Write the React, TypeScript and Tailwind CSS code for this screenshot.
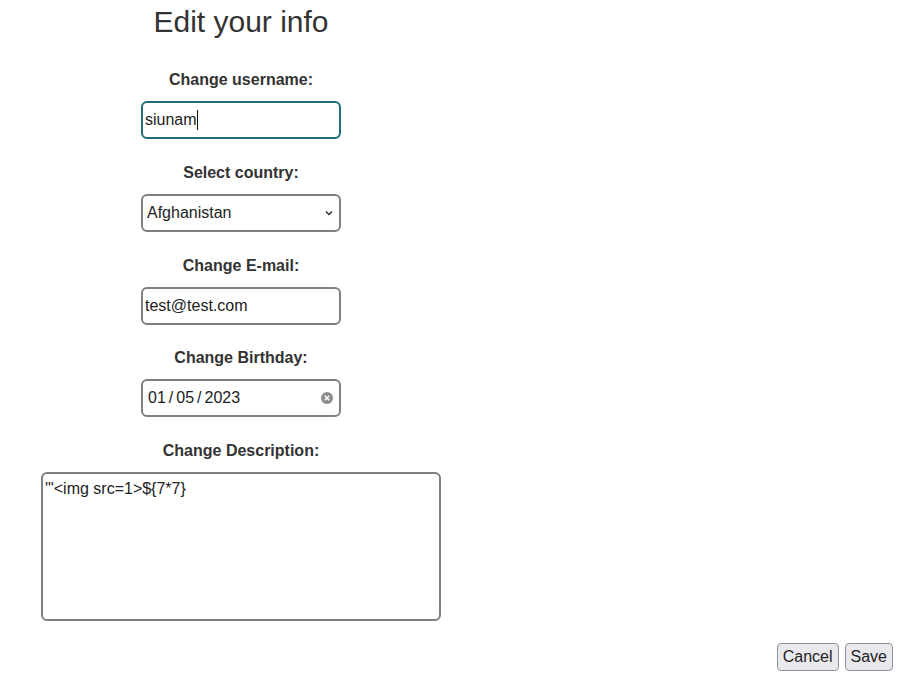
import { useState } from "react";

const font = "font-['Liberation_Sans',Arial,sans-serif]";

function Label({ children }: { children: string }) {
  return (
    <label className="block text-center text-base leading-[18px] font-bold text-[#333]">
      {children}
    </label>
  );
}

export default function App() {
  const [country, setCountry] = useState("Afghanistan");

  return (
    <div className={`${font} w-[908px] h-[684px] bg-white text-[#333] flex flex-col`}>
      <div className="w-[482px] flex flex-col items-center">
        <h1 className="mt-[5px] text-[30px] leading-[34px] font-normal text-[#333]">
          Edit your info
        </h1>

        <div className="mt-[32px]">
          <Label>Change username:</Label>
        </div>
        <div className="mt-[12px] w-[200px] h-[38px] border-2 border-[#1e6e7e] rounded-[6px] flex items-center pl-[2px] text-base text-[#222]">
          <span>siunam</span>
          <span className="w-px h-[20px] bg-[#111]" />
        </div>

        <div className="mt-[25px]">
          <Label>Select country:</Label>
        </div>
        <div className="relative mt-[12px] w-[200px] h-[38px]">
          <select
            value={country}
            onChange={(e) => setCountry(e.target.value)}
            className="appearance-none w-full h-full border-2 border-[#808080] rounded-[6px] bg-white pl-[4px] text-base text-[#222] outline-none"
          >
            <option>Afghanistan</option>
            <option>Albania</option>
            <option>Algeria</option>
          </select>
          <svg
            className="absolute right-[8px] top-[16px] pointer-events-none"
            width="8"
            height="6"
            viewBox="0 0 8 6"
          >
            <path d="M1 1.5 L4 4.5 L7 1.5" fill="none" stroke="#222" strokeWidth="1.3" />
          </svg>
        </div>

        <div className="mt-[25px]">
          <Label>Change E-mail:</Label>
        </div>
        <div className="mt-[12px] w-[200px] h-[38px] border-2 border-[#808080] rounded-[6px] flex items-center pl-[2px] text-base text-[#222]">
          test@test.com
        </div>

        <div className="mt-[24px]">
          <Label>Change Birthday:</Label>
        </div>
        <div className="mt-[12px] w-[200px] h-[38px] border-2 border-[#808080] rounded-[6px] flex items-center pl-[5px] pr-[6px] text-base text-[#222]">
          <span>01</span>
          <span className="mx-[3px]">/</span>
          <span>05</span>
          <span className="mx-[3px]">/</span>
          <span>2023</span>
          <svg className="ml-auto" width="12" height="12" viewBox="0 0 12 12">
            <circle cx="6" cy="6" r="6" fill="#8c8c8c" />
            <path d="M3.8 3.8 L8.2 8.2 M8.2 3.8 L3.8 8.2" stroke="#fff" strokeWidth="1.6" />
          </svg>
        </div>

        <div className="mt-[25px]">
          <Label>Change Description:</Label>
        </div>
        <div className="mt-[12px] w-[400px] h-[149px] border-2 border-[#808080] rounded-[6px] pl-[2px] pt-[6px] text-base leading-[18px] text-[#222]">
          {"'\"<img src=1>${7*7}"}
        </div>
      </div>

      <div className="mt-[22px] flex justify-end gap-[6px] pr-[15px]">
        <button
          type="button"
          className="h-[28px] px-[5px] border border-[#8f8f9d] rounded-[4px] bg-[#e9e9ed] text-base text-[#222]"
        >
          Cancel
        </button>
        <button
          type="button"
          className="h-[28px] px-[5px] border border-[#8f8f9d] rounded-[4px] bg-[#e9e9ed] text-base text-[#222]"
        >
          Save
        </button>
      </div>
    </div>
  );
}
